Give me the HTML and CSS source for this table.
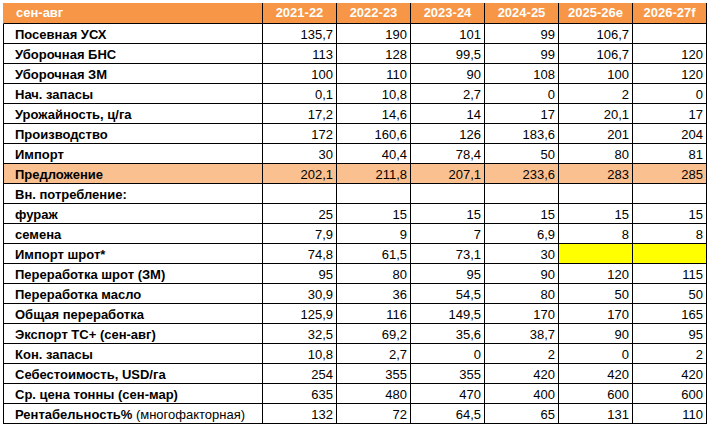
FILE: index.html
```html
<!DOCTYPE html>
<html lang="ru">
<head>
<meta charset="utf-8">
<title>Баланс</title>
<link rel="stylesheet" href="styles.css">
</head>
<body>
<table class="sheet">
  <thead>
    <tr>
      <th class="label">сен-авг</th>
      <th>2021-22</th>
      <th>2022-23</th>
      <th>2023-24</th>
      <th>2024-25</th>
      <th>2025-26e</th>
      <th>2026-27f</th>
    </tr>
  </thead>
  <tbody>
    <tr><td class="label">Посевная УСХ</td><td>135,7</td><td>190</td><td>101</td><td>99</td><td>106,7</td><td></td></tr>
    <tr><td class="label">Уборочная БНС</td><td>113</td><td>128</td><td>99,5</td><td>99</td><td>106,7</td><td>120</td></tr>
    <tr><td class="label">Уборочная ЗМ</td><td>100</td><td>110</td><td>90</td><td>108</td><td>100</td><td>120</td></tr>
    <tr><td class="label">Нач. запасы</td><td>0,1</td><td>10,8</td><td>2,7</td><td>0</td><td>2</td><td>0</td></tr>
    <tr><td class="label">Урожайность, ц/га</td><td>17,2</td><td>14,6</td><td>14</td><td>17</td><td>20,1</td><td>17</td></tr>
    <tr><td class="label">Производство</td><td>172</td><td>160,6</td><td>126</td><td>183,6</td><td>201</td><td>204</td></tr>
    <tr><td class="label">Импорт</td><td>30</td><td>40,4</td><td>78,4</td><td>50</td><td>80</td><td>81</td></tr>
    <tr class="supply"><td class="label">Предложение</td><td>202,1</td><td>211,8</td><td>207,1</td><td>233,6</td><td>283</td><td>285</td></tr>
    <tr><td class="label">Вн. потребление:</td><td></td><td></td><td></td><td></td><td></td><td></td></tr>
    <tr><td class="label">фураж</td><td>25</td><td>15</td><td>15</td><td>15</td><td>15</td><td>15</td></tr>
    <tr><td class="label">семена</td><td>7,9</td><td>9</td><td>7</td><td>6,9</td><td>8</td><td>8</td></tr>
    <tr><td class="label">Импорт шрот*</td><td>74,8</td><td>61,5</td><td>73,1</td><td>30</td><td class="hl"></td><td class="hl"></td></tr>
    <tr><td class="label">Переработка шрот (ЗМ)</td><td>95</td><td>80</td><td>95</td><td>90</td><td>120</td><td>115</td></tr>
    <tr><td class="label">Переработка масло</td><td>30,9</td><td>36</td><td>54,5</td><td>80</td><td>50</td><td>50</td></tr>
    <tr><td class="label">Общая переработка</td><td>125,9</td><td>116</td><td>149,5</td><td>170</td><td>170</td><td>165</td></tr>
    <tr><td class="label">Экспорт ТС+ (сен-авг)</td><td>32,5</td><td>69,2</td><td>35,6</td><td>38,7</td><td>90</td><td>95</td></tr>
    <tr><td class="label">Кон. запасы</td><td>10,8</td><td>2,7</td><td>0</td><td>2</td><td>0</td><td>2</td></tr>
    <tr><td class="label">Себестоимость, USD/га</td><td>254</td><td>355</td><td>355</td><td>420</td><td>420</td><td>420</td></tr>
    <tr><td class="label">Ср. цена тонны (сен-мар)</td><td>635</td><td>480</td><td>470</td><td>400</td><td>600</td><td>600</td></tr>
    <tr><td class="label">Рентабельность% <span class="note">(многофакторная)</span></td><td>132</td><td>72</td><td>64,5</td><td>65</td><td>131</td><td>110</td></tr>
  </tbody>
</table>
</body>
</html>
```

FILE: styles.css
```css
html, body {
  margin: 0;
  padding: 0;
  background: #ffffff;
}

body {
  padding: 3px 0 0 3px;
  font-family: "Liberation Sans", Arial, sans-serif;
  font-size: 13px;
  color: #000000;
}

.sheet {
  border-collapse: separate;
  border-spacing: 0;
  table-layout: fixed;
  width: 704px;
}

.sheet th,
.sheet td {
  box-sizing: border-box;
  border-right: 1px solid #000000;
  border-bottom: 1px solid #000000;
  padding: 0 3px 0 2px;
  text-align: right;
  vertical-align: middle;
  white-space: nowrap;
  overflow: hidden;
}

.sheet th {
  width: 74px;
  height: 21px;
  padding: 0 2px 1px 2px;
  background: #f79646;
  color: #ffffff;
  font-weight: bold;
  text-align: center;
}

.sheet th.label {
  width: 260px;
  text-align: left;
  padding-left: 12px;
  border-left: 1px solid #f79646;
}

.sheet td {
  height: 20px;
  padding-top: 1px;
}

.sheet td.label {
  border-left: 1px solid #000000;
  text-align: left;
  font-weight: bold;
  padding-left: 11px;
}

.sheet .note {
  font-weight: normal;
}

.sheet .supply td {
  background: #fac090;
}

.sheet td.hl {
  background: #ffff00;
}
```
